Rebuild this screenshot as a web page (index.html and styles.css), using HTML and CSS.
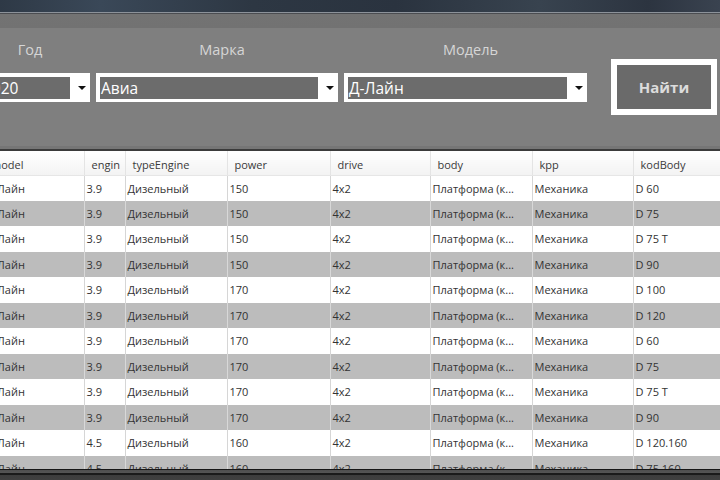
FILE: index.html
```html
<!DOCTYPE html>
<html lang="ru">
<head>
<meta charset="utf-8">
<title>Поиск</title>
<link rel="stylesheet" href="styles.css">
</head>
<body>
<div class="desktop"></div>
<div class="window">
  <div class="titlebar"></div>
  <div class="panel">
    <div class="filters">
      <div class="label">Год</div>
      <div class="label label-shift">Марка</div>
      <div class="label label-shift">Модель</div>
      <div></div>
      <div class="combo"><span class="field field-year">2020</span><span class="arrow"></span></div>
      <div class="combo"><span class="field">Авиа</span><span class="arrow"></span></div>
      <div class="combo"><span class="field">Д-Лайн</span><span class="arrow"></span></div>
      <button class="find">Найти</button>
    </div>
  </div>
  <div class="gutter"></div>
  <div class="grid-wrap">
    <table class="grid">
      <colgroup>
        <col class="c-model"><col class="c-engin"><col class="c-type"><col class="c-power"><col class="c-drive"><col class="c-body"><col class="c-kpp"><col class="c-kod">
      </colgroup>
      <thead>
        <tr><th>model</th><th>engin</th><th>typeEngine</th><th>power</th><th>drive</th><th>body</th><th>kpp</th><th>kodBody</th></tr>
      </thead>
      <tbody>
        <tr><td>Д-Лайн</td><td>3.9</td><td>Дизельный</td><td>150</td><td>4x2</td><td>Платформа (к...</td><td>Механика</td><td>D 60</td></tr>
        <tr><td>Д-Лайн</td><td>3.9</td><td>Дизельный</td><td>150</td><td>4x2</td><td>Платформа (к...</td><td>Механика</td><td>D 75</td></tr>
        <tr><td>Д-Лайн</td><td>3.9</td><td>Дизельный</td><td>150</td><td>4x2</td><td>Платформа (к...</td><td>Механика</td><td>D 75 T</td></tr>
        <tr><td>Д-Лайн</td><td>3.9</td><td>Дизельный</td><td>150</td><td>4x2</td><td>Платформа (к...</td><td>Механика</td><td>D 90</td></tr>
        <tr><td>Д-Лайн</td><td>3.9</td><td>Дизельный</td><td>170</td><td>4x2</td><td>Платформа (к...</td><td>Механика</td><td>D 100</td></tr>
        <tr><td>Д-Лайн</td><td>3.9</td><td>Дизельный</td><td>170</td><td>4x2</td><td>Платформа (к...</td><td>Механика</td><td>D 120</td></tr>
        <tr><td>Д-Лайн</td><td>3.9</td><td>Дизельный</td><td>170</td><td>4x2</td><td>Платформа (к...</td><td>Механика</td><td>D 60</td></tr>
        <tr><td>Д-Лайн</td><td>3.9</td><td>Дизельный</td><td>170</td><td>4x2</td><td>Платформа (к...</td><td>Механика</td><td>D 75</td></tr>
        <tr><td>Д-Лайн</td><td>3.9</td><td>Дизельный</td><td>170</td><td>4x2</td><td>Платформа (к...</td><td>Механика</td><td>D 75 T</td></tr>
        <tr><td>Д-Лайн</td><td>3.9</td><td>Дизельный</td><td>170</td><td>4x2</td><td>Платформа (к...</td><td>Механика</td><td>D 90</td></tr>
        <tr><td>Д-Лайн</td><td>4.5</td><td>Дизельный</td><td>160</td><td>4x2</td><td>Платформа (к...</td><td>Механика</td><td>D 120.160</td></tr>
        <tr><td>Д-Лайн</td><td>4.5</td><td>Дизельный</td><td>160</td><td>4x2</td><td>Платформа (к...</td><td>Механика</td><td>D 75.160</td></tr>
      </tbody>
    </table>
  </div>
  <div class="bottom-frame"></div>
</div>
</body>
</html>
```

FILE: styles.css
```css
* { box-sizing: border-box; }
html, body {
  margin: 0;
  padding: 0;
  width: 720px;
  height: 480px;
  overflow: hidden;
  background: #2b2b2b;
  font-family: "Open Sans", "Noto Sans", sans-serif;
}
.desktop {
  height: 12px;
  background: linear-gradient(to right, #2e3946 0%, #3a4858 14%, #2d3743 35%, #2a333f 55%, #38434f 75%, #2c3440 90%, #3a4350 100%);
}
.window {
  display: flex;
  flex-direction: column;
  height: 468px;
}
.titlebar {
  height: 16px;
  border-top: 1px solid #8c929a;
  background: linear-gradient(to bottom, #4b4d51 0px, #4b4d51 1px, #737373 1px, #727272 100%);
}
.panel {
  background: #7f7f7f;
  padding: 11px 0 31px 0;
  overflow: hidden;
}
.filters {
  display: grid;
  grid-template-columns: 120px 242px 243px 106px;
  grid-template-rows: 20px 56px;
  column-gap: 6px;
  margin-left: -30px;
  align-items: center;
}
.filters > .find { margin-left: 18px; }
.label {
  text-align: center;
  color: #d6d6d6;
  font-size: 14.5px;
  line-height: 20px;
  padding-top: 1px;
}
.label-shift { padding-left: 10px; }
.combo {
  display: flex;
  height: 29px;
  background: #ffffff;
  padding: 4px 0 3px 4px;
}
.field {
  flex: 1;
  background: #6c6c6c;
  color: #ffffff;
  font-size: 15.5px;
  line-height: 22px;
  padding-left: 1px;
  white-space: nowrap;
  overflow: hidden;
}
.field-year { padding-left: 9px; }
.arrow {
  width: 20px;
  display: flex;
  align-items: center;
  justify-content: center;
}
.arrow::before {
  content: "";
  border-left: 4px solid transparent;
  border-right: 4px solid transparent;
  border-top: 4px solid #111;
  margin-left: 4px;
}
.find {
  width: 106px;
  height: 56px;
  margin: 0;
  padding: 0;
  border: 6px solid #ffffff;
  background: #6a6a6a;
  color: #dcdcdc;
  font-family: "Open Sans", "Noto Sans", sans-serif;
  font-size: 15px;
  font-weight: 700;
}
.gutter {
  height: 5px;
  background: #767676;
  border-bottom: 2px solid #3b3b3b;
}
.grid-wrap {
  flex: 1;
  overflow: hidden;
  background: #ffffff;
}
.grid {
  border-collapse: collapse;
  table-layout: fixed;
  width: 749px;
  margin-left: -16px;
  font-size: 11px;
  color: #333333;
}
.c-model { width: 100px; }
.c-engin { width: 41px; }
.c-type { width: 102px; }
.c-power { width: 103px; }
.c-drive { width: 100px; }
.c-body { width: 102px; }
.c-kpp { width: 101px; }
.c-kod { width: 100px; }
.grid th {
  height: 24px;
  font-weight: 400;
  text-align: left;
  padding: 3px 0 0 7px;
  color: #3a3a3a;
  background: linear-gradient(to bottom, #ffffff, #f3f3f3);
  border-right: 1px solid #e4e4e4;
  border-bottom: 1px solid #e6e6e6;
  white-space: nowrap;
  overflow: hidden;
}
.grid td {
  height: 25.5px;
  padding: 0 0 0 2px;
  border-right: 1px solid #d6d6d6;
  white-space: nowrap;
  overflow: hidden;
}
.grid tbody tr:nth-child(even) td {
  background: #bcbcbc;
  border-right-color: #d8d8d8;
}
.bottom-frame {
  height: 11px;
  background: linear-gradient(to bottom, #161616 0px, #161616 1px, #4e4e4e 1px, #555555 4px, #1a1a1a 4px, #1a1a1a 6px, #3c3c3c 6px, #404040 100%);
}
```
